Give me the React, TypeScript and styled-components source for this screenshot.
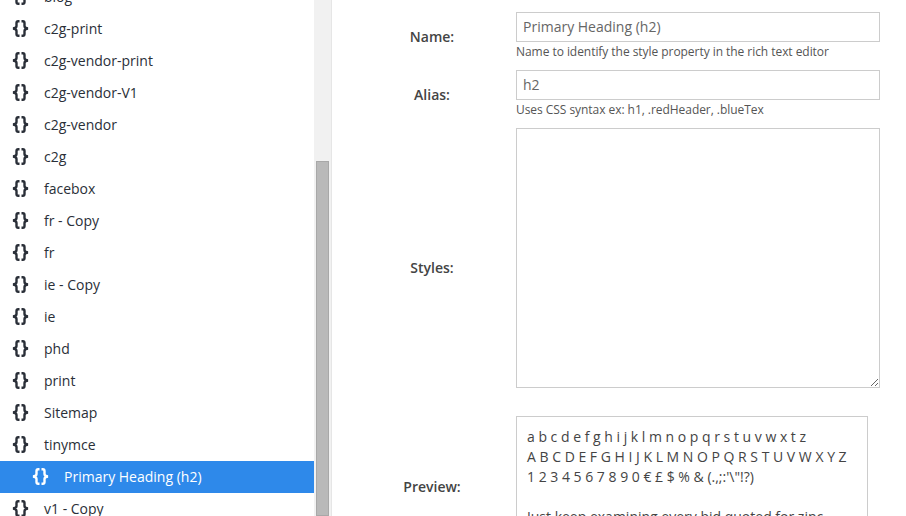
import React from 'react';
import styled, { createGlobalStyle } from 'styled-components';

const GlobalStyle = createGlobalStyle`
  html, body {
    margin: 0;
    padding: 0;
    height: 516px;
    overflow: hidden;
    background: #ffffff;
    font-family: 'Open Sans', 'Liberation Sans', sans-serif;
    color: #333333;
  }
`;

const Page = styled.div`
  display: flex;
  width: 906px;
  height: 516px;
  overflow: hidden;
`;

const Sidebar = styled.div`
  display: flex;
  width: 332px;
  height: 516px;
  flex-shrink: 0;
  box-sizing: border-box;
  border-right: 1px solid #e6e6e6;
  overflow: hidden;
`;

const TreeList = styled.ul`
  list-style: none;
  margin: -19px 0 0;
  padding: 0;
  width: 314px;
  flex-shrink: 0;
`;

const TreeRow = styled.li<{ $active?: boolean; $nested?: boolean }>`
  display: flex;
  align-items: center;
  height: 32px;
  box-sizing: border-box;
  padding-bottom: 2px;
  padding-left: ${props => (props.$nested ? '32px' : '12px')};
  background: ${props => (props.$active ? '#2e89ea' : 'transparent')};
  color: ${props => (props.$active ? '#ffffff' : '#2a2f38')};
  font-size: 14px;
`;

const TreeIcon = styled.svg`
  width: 17px;
  height: 17px;
  margin-right: 15px;
  flex-shrink: 0;
`;

const Scrollbar = styled.div`
  display: flex;
  flex-direction: column;
  width: 17px;
  height: 516px;
  padding: 161px 2px 0;
  box-sizing: border-box;
  background: #f1f1f1;
`;

const ScrollThumb = styled.div`
  flex: 1;
  background: #b9b9b9;
  border: 1px solid #a8a8a8;
`;

const Form = styled.div`
  display: flex;
  flex-direction: column;
  padding-top: 12px;
  flex: 1;
`;

const Field = styled.div<{ $mb?: number }>`
  display: grid;
  grid-template-columns: 184px 1fr;
  align-items: center;
  margin-bottom: ${props => props.$mb ?? 9}px;
`;

const Label = styled.label`
  justify-self: center;
  margin-left: 16px;
  font-size: 14px;
  font-weight: 600;
  color: #444444;
`;

const Control = styled.div`
  display: flex;
  flex-direction: column;
`;

const TextInput = styled.input`
  width: 364px;
  height: 30px;
  box-sizing: border-box;
  border: 1px solid #cccccc;
  padding: 0 6px 2px;
  font-family: inherit;
  font-size: 14px;
  color: #666666;
  outline: none;
`;

const Hint = styled.span`
  font-size: 12px;
  line-height: 19px;
  letter-spacing: -0.05px;
  color: #555555;
`;

const StylesArea = styled.textarea`
  display: block;
  width: 364px;
  height: 260px;
  box-sizing: border-box;
  border: 1px solid #cccccc;
  margin: 0 0 18px;
  padding: 6px;
  font-family: inherit;
  font-size: 14px;
  outline: none;
`;

const PreviewBox = styled.div`
  width: 352px;
  height: 140px;
  box-sizing: border-box;
  border: 1px solid #cccccc;
  padding: 10px 10px 0;
  font-size: 14px;
  line-height: 20px;
  color: #444444;
  overflow: hidden;
`;

const PreviewLine = styled.div`
  white-space: pre;
`;

const PreviewPara = styled.p`
  margin: 20px 0 0;
`;

const BracesIcon = () => (
  <TreeIcon viewBox="0 0 17 17" fill="none" stroke="currentColor" strokeWidth="2.4">
    <path d="M7.5 1.2H6.2C4.9 1.2 4.5 1.9 4.5 3v3c0 1.4-.8 2.2-3.500 2.500 2.700.3 3.500 1.100 3.500 2.500v3c0 1.100.4 1.800 1.700 1.800h1.300" />
    <path d="M9.500 1.200h1.300c1.300 0 1.700.7 1.700 1.800v3c0 1.400.8 2.200 3.500 2.500-2.700.3-3.500 1.100-3.500 2.500v3c0 1.100-.4 1.800-1.700 1.800H9.500" />
  </TreeIcon>
);

const items = [
  'blog',
  'c2g-print',
  'c2g-vendor-print',
  'c2g-vendor-V1',
  'c2g-vendor',
  'c2g',
  'facebox',
  'fr - Copy',
  'fr',
  'ie - Copy',
  'ie',
  'phd',
  'print',
  'Sitemap',
  'tinymce',
];

export default function App() {
  return (
    <Page>
      <GlobalStyle />
      <Sidebar>
        <TreeList>
          {items.map(name => (
            <TreeRow key={name}>
              <BracesIcon />
              {name}
            </TreeRow>
          ))}
          <TreeRow $active $nested>
            <BracesIcon />
            Primary Heading (h2)
          </TreeRow>
          <TreeRow>
            <BracesIcon />
            v1 - Copy
          </TreeRow>
        </TreeList>
        <Scrollbar>
          <ScrollThumb />
        </Scrollbar>
      </Sidebar>
      <Form>
        <Field>
          <Label>Name:</Label>
          <Control>
            <TextInput readOnly value="Primary Heading (h2)" />
            <Hint>Name to identify the style property in the rich text editor</Hint>
          </Control>
        </Field>
        <Field>
          <Label>Alias:</Label>
          <Control>
            <TextInput readOnly value="h2" />
            <Hint>Uses CSS syntax ex: h1, .redHeader, .blueTex</Hint>
          </Control>
        </Field>
        <Field $mb={10}>
          <Label>Styles:</Label>
          <Control>
            <StylesArea readOnly />
          </Control>
        </Field>
        <Field>
          <Label>Preview:</Label>
          <PreviewBox>
            <PreviewLine>a b c d e f g h i j k l m n o p q r s t u v w x t z</PreviewLine>
            <PreviewLine>A B C D E F G H I J K L M N O P Q R S T U V W X Y Z</PreviewLine>
            <PreviewLine>1 2 3 4 5 6 7 8 9 0 € £ $ % &amp; (.,;:'\"!?)</PreviewLine>
            <PreviewPara>Just keep examining every bid quoted for zinc</PreviewPara>
          </PreviewBox>
        </Field>
      </Form>
    </Page>
  );
}
